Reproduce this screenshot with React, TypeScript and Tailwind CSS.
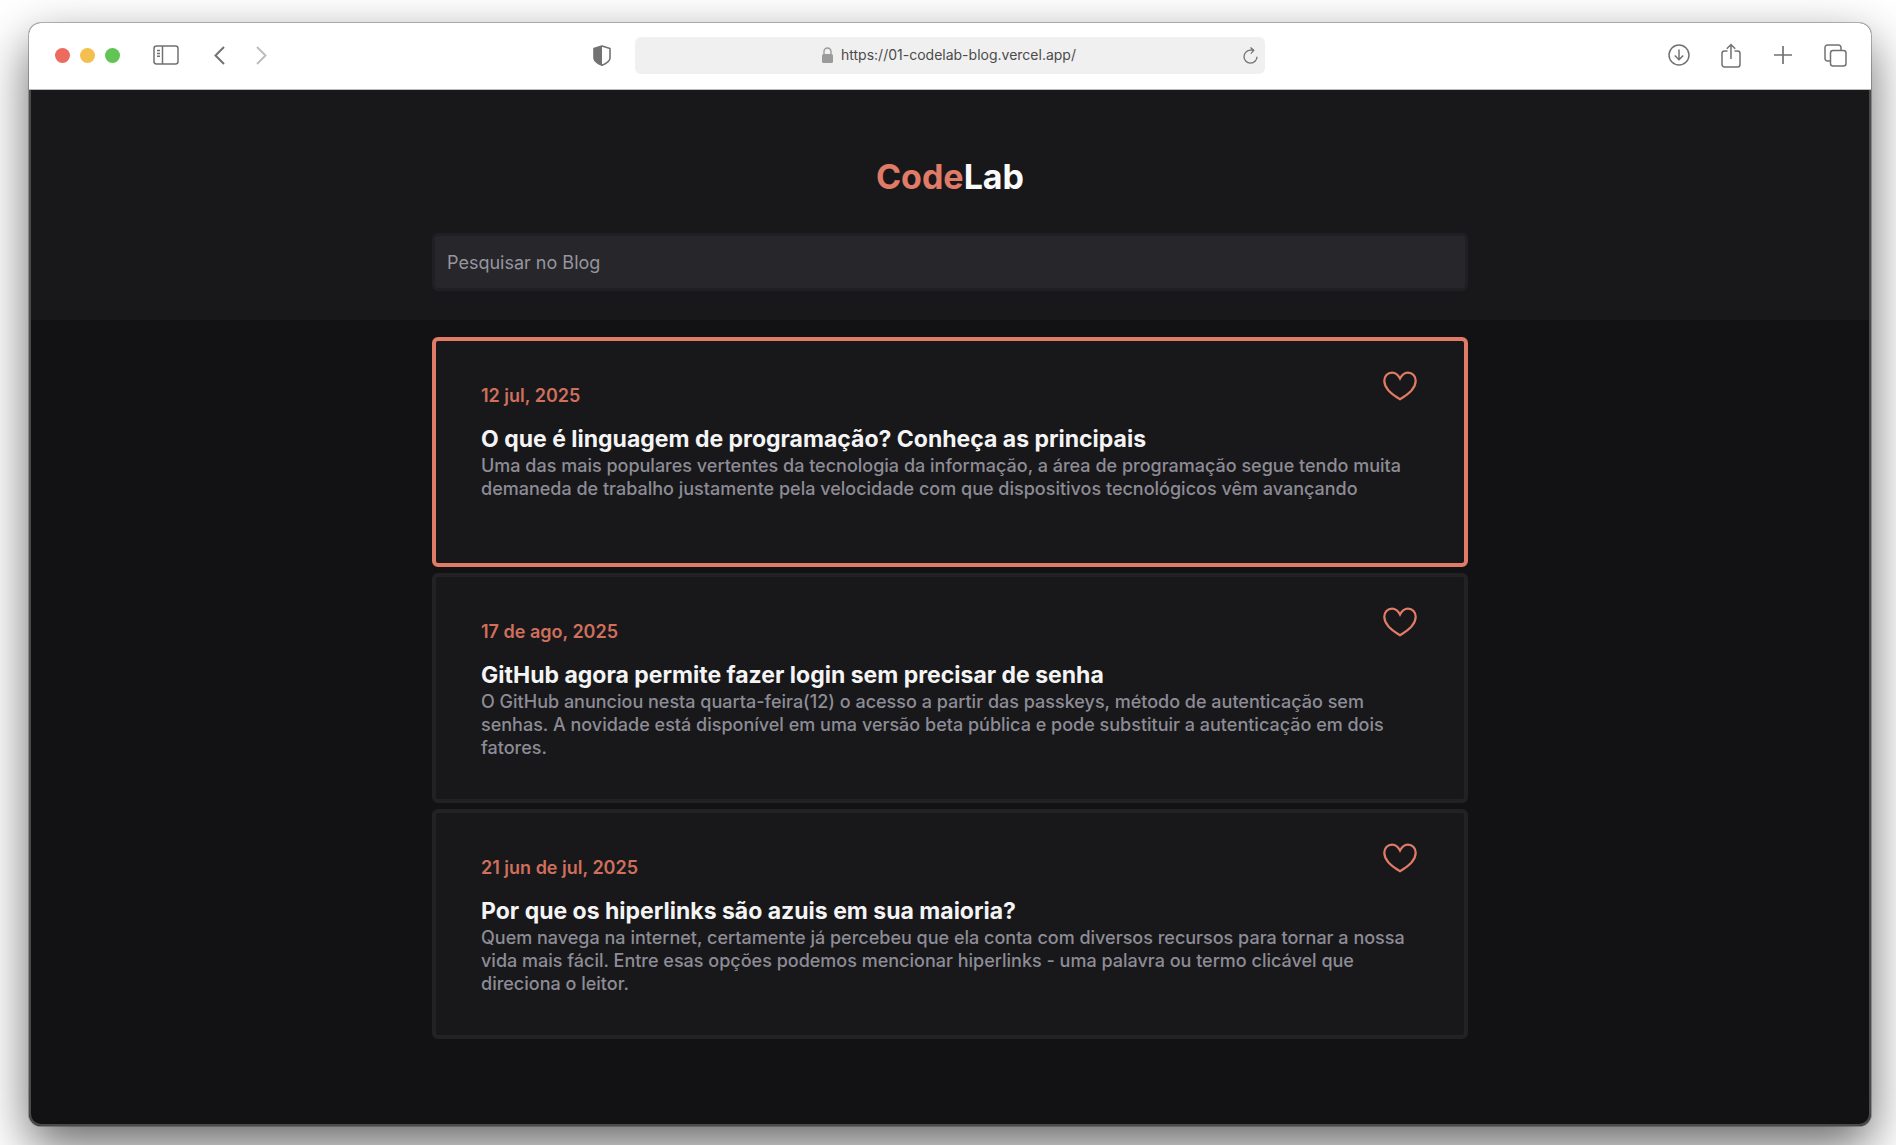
type Post = { date: string; title: string; text: string; active?: boolean };

const posts: Post[] = [
  {
    date: "12 jul, 2025",
    title: "O que é linguagem de programação? Conheça as principais",
    text: "Uma das mais populares vertentes da tecnologia da informação, a área de programação segue tendo muita demaneda de trabalho justamente pela velocidade com que dispositivos tecnológicos vêm avançando",
    active: true,
  },
  {
    date: "17 de ago, 2025",
    title: "GitHub agora permite fazer login sem precisar de senha",
    text: "O GitHub anunciou nesta quarta-feira(12) o acesso a partir das passkeys, método de autenticação sem senhas. A novidade está disponível em uma versão beta pública e pode substituir a autenticação em dois fatores.",
  },
  {
    date: "21 jun de jul, 2025",
    title: "Por que os hiperlinks são azuis em sua maioria?",
    text: "Quem navega na internet, certamente já percebeu que ela conta com diversos recursos para tornar a nossa vida mais fácil. Entre esas opções podemos mencionar hiperlinks - uma palavra ou termo clicável que direciona o leitor.",
  },
];

function BrowserBar() {
  return (
    <div className="grid h-[67px] shrink-0 grid-cols-[1fr_auto_1fr] items-center border-b border-[#b9bab9] bg-white pb-0.5 text-[#727272]">
      <div className="flex items-center justify-between pr-6 pl-[26px]">
        <div className="flex items-center">
          <div className="flex gap-2.5">
            <span className="size-[15px] rounded-full bg-[#ed6a5f]" />
            <span className="size-[15px] rounded-full bg-[#f5bf4f]" />
            <span className="size-[15px] rounded-full bg-[#61c454]" />
          </div>
          <button aria-label="Barra lateral" className="ml-[33px]">
            <svg width="26" height="20" viewBox="0 0 26 20" fill="none" stroke="currentColor" strokeWidth="1.5">
              <rect x="1" y="1" width="24" height="18" rx="2.5" />
              <path d="M9.5 1v18M4 5.5h3M4 8.5h3M4 11.2h3" />
            </svg>
          </button>
          <button aria-label="Voltar" className="ml-[35px]">
            <svg width="11" height="19" viewBox="0 0 11 19" fill="none" stroke="currentColor" strokeWidth="2">
              <path d="M10 1 1.5 9.5 10 18" />
            </svg>
          </button>
          <button aria-label="Avançar" className="ml-[31px] text-[#bdbdbd]">
            <svg width="11" height="19" viewBox="0 0 11 19" fill="none" stroke="currentColor" strokeWidth="2">
              <path d="m1 1 8.500 8.500L1 18" />
            </svg>
          </button>
        </div>
        <button aria-label="Privacidade">
          <svg width="18" height="21" viewBox="0 0 18 21" fill="none" stroke="currentColor" strokeWidth="1.6">
            <path d="M9 1 17 3.600V13c0 3.200-3.200 5.300-8 7.200C4.200 18.300 1 16.200 1 13V3.600Z" strokeLinejoin="round" />
            <path d="M9 1 1 3.600V13c0 3.200 3.200 5.300 8 7.200Z" fill="currentColor" stroke="none" />
          </svg>
        </button>
      </div>
      <div className="flex h-[37px] w-[630px] items-center rounded-md bg-[#f0f0f0] pr-[7px]">
        <div className="flex flex-1 items-center justify-center gap-2 pl-5">
          <svg width="11" height="16" viewBox="0 0 11 16" fill="#9b9b9b">
            <rect y="7" width="11" height="9" rx="1.500" />
            <path d="M2 8V4.500a3.500 3.500 0 0 1 7 0V8" fill="none" stroke="#9b9b9b" strokeWidth="1.400" />
          </svg>
          <span className="text-sm leading-5 text-[#4b4b4b]">https://01-codelab-blog.vercel.app/</span>
        </div>
        <button aria-label="Recarregar">
          <svg width="15" height="17" viewBox="0 0 15 17" fill="none" stroke="currentColor" strokeWidth="1.300">
            <path d="M14 9.700A6.500 6.500 0 1 1 7.500 3.200h3.300M7.500.500l3.300 2.900L7.800 6.600" />
          </svg>
        </button>
      </div>
      <div className="flex items-center justify-end pr-6">
        <button aria-label="Downloads">
          <svg width="22" height="22" viewBox="0 0 22 22" fill="none" stroke="currentColor" strokeWidth="1.500">
            <circle cx="11" cy="11" r="10" />
            <path d="M11 5.500v10M6.800 11.500 11 15.700l4.200-4.200" />
          </svg>
        </button>
        <button aria-label="Compartilhar" className="ml-[31px]">
          <svg width="20" height="25" viewBox="0 0 20 25" fill="none" stroke="currentColor" strokeWidth="1.500">
            <path d="M6.500 8H3.500A2.500 2.500 0 0 0 1 10.500v11A2.500 2.500 0 0 0 3.500 24h13a2.500 2.500 0 0 0 2.500-2.500v-11A2.500 2.500 0 0 0 16.500 8h-3M10 16V1.500M5.800 5.700 10 1.500l4.200 4.200" />
          </svg>
        </button>
        <button aria-label="Nova aba" className="ml-[33px]">
          <svg width="18" height="18" viewBox="0 0 18 18" fill="none" stroke="currentColor" strokeWidth="1.700">
            <path d="M9 0v18M0 9h18" />
          </svg>
        </button>
        <button aria-label="Abas" className="ml-8">
          <svg width="23" height="23" viewBox="0 0 23 23" fill="none" stroke="currentColor" strokeWidth="1.500">
            <rect x="6.500" y="6.500" width="15.500" height="15.500" rx="2.500" />
            <path d="M6.500 17H3.500A2.500 2.500 0 0 1 1 14.500v-11A2.500 2.500 0 0 1 3.500 1h11A2.500 2.500 0 0 1 17 3.500v3" />
          </svg>
        </button>
      </div>
    </div>
  );
}

function PostCard({ post }: { post: Post }) {
  return (
    <article
      className={`relative min-h-[230px] rounded-md border-4 bg-[#18181a] px-[45px] pt-[41px] pb-8 ${
        post.active ? "border-[#e07b67]" : "border-[#222225]"
      }`}
    >
      <button aria-label="Curtir" className="absolute top-7 right-[46px] text-[#e07b67]">
        <svg width="36" height="32" viewBox="0 0 36 32" fill="none" stroke="currentColor" strokeWidth="2.2">
          <path d="M18 9.500C16 5.500 13.300 3.600 10 3.600c-4.600 0-7.700 3.700-7.700 8.200C2.300 19 9.500 25.400 18 30.200c8.500-4.800 15.700-11.200 15.700-18.400 0-4.500-3.100-8.200-7.700-8.200-3.300 0-6 1.900-8 5.900Z" />
        </svg>
      </button>
      <time className="block text-lg leading-7 font-semibold text-[#cf6f5c]">{post.date}</time>
      <h2 className="mt-[15px] text-[23px] leading-7 font-bold text-[#f4f4f5]">{post.title}</h2>
      <p className="mt-px text-lg leading-[23px] font-[450] text-[#8d8c96]">{post.text}</p>
    </article>
  );
}

export default function App() {
  return (
    <div className="flex min-h-screen overflow-hidden bg-white pt-[23px] pr-[25px] pb-[19px] pl-[29px] font-['Inter',sans-serif]">
      <div className="flex flex-1 flex-col overflow-hidden rounded-xl bg-[#121214] shadow-[0_0_0_1px_rgba(0,0,0,0.25),0_20px_50px_rgba(0,0,0,0.6)]">
        <BrowserBar />
        <div className="flex flex-1 flex-col rounded-b-xl border-x-2 border-b-2 border-[#4a4a4a]">
          <header className="bg-[#18181a] px-6 pt-[63px] pb-[29px]">
            <div className="mx-auto max-w-[1036px]">
              <h1 className="text-center text-[34px] leading-12 font-bold text-[#fafafa]">
                <span className="text-[#e07b67]">Code</span>Lab
              </h1>
              <input
                type="search"
                aria-label="Pesquisar no Blog"
                placeholder="Pesquisar no Blog"
                className="mt-8 block h-[58px] w-full rounded-md border-[3px] border-[#202024] bg-[#26262b] px-3 text-lg text-[#e1e1e6] outline-none placeholder:text-[#96959e]"
              />
            </div>
          </header>
          <main className="px-6 pt-[17px] pb-8">
            <div className="mx-auto flex max-w-[1036px] flex-col gap-1.5">
              {posts.map((post) => (
                <PostCard key={post.date} post={post} />
              ))}
            </div>
          </main>
        </div>
      </div>
    </div>
  );
}
